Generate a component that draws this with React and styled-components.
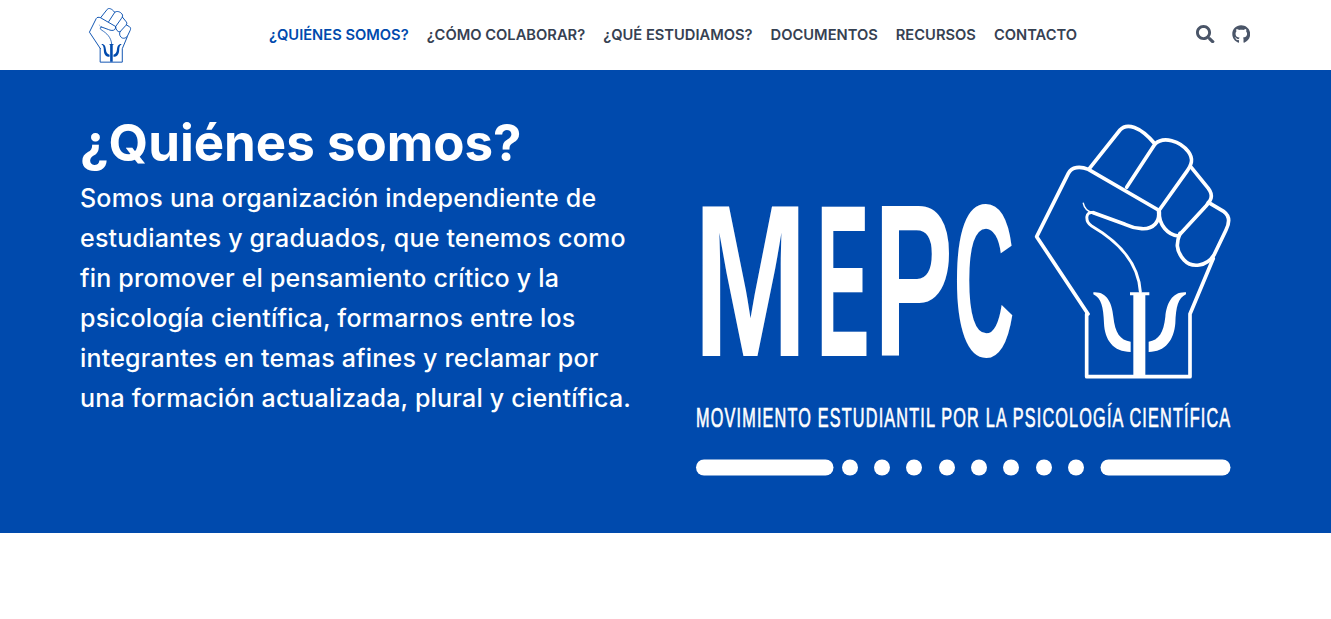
import styled, { createGlobalStyle } from "styled-components";
import { FaSearch, FaGithub } from "react-icons/fa";

const BLUE = "#004aad";

const GlobalStyle = createGlobalStyle`
  html, body {
    margin: 0;
    padding: 0;
    background: #fff;
    font-family: Inter, "Open Sans", sans-serif;
  }
`;

const links = [
  "¿Quiénes somos?",
  "¿Cómo colaborar?",
  "¿Qué estudiamos?",
  "Documentos",
  "Recursos",
  "Contacto",
];

const dots = [850, 882, 914, 947, 979, 1011, 1044, 1076];

// big logo letters, squeezed one by one
const letters = [
  { ch: "M", x: 693.5, sx: 0.63 },
  { ch: "E", x: 816.5, sx: 0.366 },
  { ch: "P", x: 874, sx: 0.546 },
  { ch: "C", x: 953.5, sx: 0.39 },
];

// fist + psi, drawn in a 630x840 box
function Fist({ color, strokeWidth }) {
  return (
    <g fill="none" stroke={color} strokeWidth={strokeWidth} strokeLinejoin="round" strokeLinecap="round">
      <path d="M174 612 L20 380 L115 190 C125 170 150 168 175 178 L385 300 C392 335 370 358 335 356 C315 355 300 350 285 343 L190 308" />
      <path d="M190 308 C165 302 165 335 185 348 C265 395 325 455 331 545" strokeWidth={strokeWidth * 0.8} />
      <path d="M160 280 C163 295 172 303 186 308" strokeWidth={strokeWidth * 0.4} />
      <path d="M178 176 L270 60 C290 38 330 48 375 102 L290 232" />
      <path d="M375 102 C400 78 450 92 475 125 C492 148 484 165 470 185 L388 300" />
      <path d="M482 170 L535 235 C552 258 542 272 528 288 L445 378 C415 375 385 345 388 305" />
      <path d="M535 277 L582 305 C602 320 598 340 588 360 L552 435 C530 470 485 475 462 450 C435 420 440 395 450 370" />
      <path d="M550 445 L480 612 L480 800 L170 800 L170 612" />
      <g fill={color} stroke="none">
        <path d="M300 547 H358 V556 H346 V795 H310 V556 H300 Z" />
        <path d="M190 547 C230 544 246 578 250 620 C255 668 270 690 302 695 V726 C250 726 224 690 222 640 C220 590 214 565 190 553 Z" />
        <path d="M468 547 C428 544 410 578 406 620 C401 668 386 690 356 695 V726 C406 726 432 690 436 640 C438 590 444 565 468 553 Z" />
      </g>
    </g>
  );
}

function MepcLogo() {
  return (
    <HeroLogo viewBox="690 115 550 370">
      <g fill="#fff" fontFamily="'Liberation Sans', sans-serif" fontWeight="700" fontSize="217">
        {letters.map(({ ch, x, sx }) => (
          <text key={ch} transform={`translate(${x} 356) scale(${sx} 1)`}>
            {ch}
          </text>
        ))}
      </g>
      <svg x="1030" y="110" width="210" height="280" viewBox="0 0 630 840">
        <Fist color="#fff" strokeWidth={11} />
      </svg>
      <text
        transform="translate(696 427) scale(0.58 1)"
        fill="#fff"
        stroke="#fff"
        strokeWidth="0.7"
        fontFamily="'Liberation Sans', sans-serif"
        fontSize="28"
        textLength="921"
        lengthAdjust="spacing"
      >
        MOVIMIENTO ESTUDIANTIL POR LA PSICOLOGÍA CIENTÍFICA
      </text>
      <g fill="#fff">
        <rect x="696" y="459.5" width="137.5" height="16" rx="8" />
        {dots.map((cx) => (
          <circle key={cx} cx={cx} cy="467.5" r="8" />
        ))}
        <rect x="1100.5" y="459.5" width="130" height="16" rx="8" />
      </g>
    </HeroLogo>
  );
}

export default function App() {
  return (
    <>
      <GlobalStyle />
      <Header>
        <LogoLink href="#">
          <svg width="45" height="60" viewBox="0 0 630 840">
            <Fist color={BLUE} strokeWidth={13} />
          </svg>
        </LogoLink>
        <Nav>
          {links.map((label, i) => (
            <NavLink key={label} href="#" $active={i === 0}>
              {label}
            </NavLink>
          ))}
        </Nav>
        <IconRow>
          <IconLink href="#">
            <FaSearch />
          </IconLink>
          <IconLink href="#">
            <FaGithub />
          </IconLink>
        </IconRow>
      </Header>
      <Hero>
        <HeroText>
          <Title>¿Quiénes somos?</Title>
          <Lead>
            Somos una organización independiente de estudiantes y graduados, que tenemos como fin
            promover el pensamiento crítico y la psicología científica, formarnos entre los
            integrantes en temas afines y reclamar por una formación actualizada, plural y
            científica.
          </Lead>
        </HeroText>
        <MepcLogo />
      </Hero>
    </>
  );
}

const Header = styled.header`
  display: flex;
  align-items: center;
  height: 70px;
  padding: 0 81px 0 88px;
  background: #fff;
`;

const LogoLink = styled.a`
  display: flex;
  width: 45px;
  height: 60px;
`;

const Nav = styled.nav`
  display: flex;
  gap: 18px;
  margin-left: 136px;
`;

const NavLink = styled.a`
  font-size: 14.7px;
  font-weight: 600;
  text-transform: uppercase;
  text-decoration: none;
  white-space: nowrap;
  color: ${(p) => (p.$active ? BLUE : "#364152")};
`;

const IconRow = styled.div`
  display: flex;
  gap: 17px;
  margin-left: auto;
  margin-top: -2px;
`;

const IconLink = styled.a`
  display: flex;
  font-size: 18.5px;
  color: #4a5568;
`;

const Hero = styled.section`
  display: flex;
  align-items: flex-start;
  height: 463px;
  padding: 45px 0 0 80px;
  box-sizing: border-box;
  background: ${BLUE};
`;

const HeroText = styled.div`
  flex: 0 0 562px;
  margin-right: 48px;
  color: #fff;
`;

const Title = styled.h1`
  margin: 0;
  font-size: 51px;
  line-height: 56px;
  font-weight: 700;
  white-space: nowrap;
`;

const Lead = styled.p`
  margin: 7px 0 0;
  font-size: 25px;
  line-height: 40px;
  font-weight: 500;
  letter-spacing: 0.2px;
`;

const HeroLogo = styled.svg`
  flex: none;
  width: 550px;
  height: 370px;
`;
